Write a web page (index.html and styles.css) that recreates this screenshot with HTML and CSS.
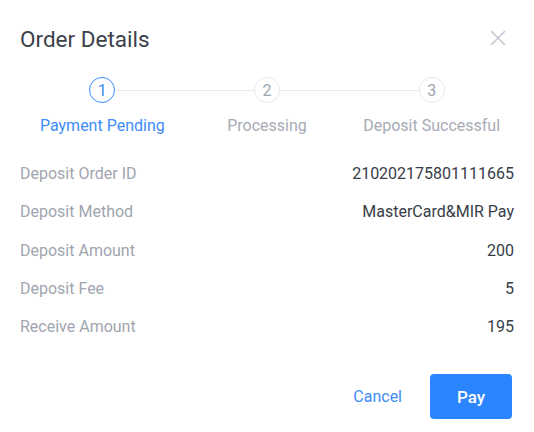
FILE: index.html
```html
<!DOCTYPE html>
<html lang="en">
<head>
<meta charset="utf-8">
<title>Order Details</title>
<link rel="stylesheet" href="styles.css">
</head>
<body>
<div class="dialog">
  <div class="header">
    <h1 class="title">Order Details</h1>
    <button class="close" aria-label="Close">
      <svg width="16" height="16" viewBox="0 0 16 16"><path d="M1 1L15 15M15 1L1 15" stroke="#c3c7cf" stroke-width="1.6" fill="none"/></svg>
    </button>
  </div>
  <div class="steps">
    <div class="step active">
      <span class="circle">1</span>
      <span class="step-label">Payment Pending</span>
    </div>
    <div class="step">
      <span class="circle">2</span>
      <span class="step-label">Processing</span>
    </div>
    <div class="step">
      <span class="circle">3</span>
      <span class="step-label">Deposit Successful</span>
    </div>
  </div>
  <div class="rows">
    <div class="row"><span class="label">Deposit Order ID</span><span class="value">210202175801111665</span></div>
    <div class="row"><span class="label">Deposit Method</span><span class="value">MasterCard&amp;MIR Pay</span></div>
    <div class="row"><span class="label">Deposit Amount</span><span class="value">200</span></div>
    <div class="row"><span class="label">Deposit Fee</span><span class="value">5</span></div>
    <div class="row"><span class="label">Receive Amount</span><span class="value">195</span></div>
  </div>
  <div class="footer">
    <button class="btn-text">Cancel</button>
    <button class="btn-primary">Pay</button>
  </div>
</div>
</body>
</html>
```
FILE: styles.css
```css
* { box-sizing: border-box; }
html, body {
  margin: 0;
  padding: 0;
  background: #fff;
  font-family: Roboto, "Liberation Sans", sans-serif;
}
.dialog {
  width: 534px;
  padding: 0 20px;
}
.header {
  display: flex;
  justify-content: space-between;
  align-items: flex-start;
  padding-top: 24px;
}
.title {
  margin: 0;
  font-size: 22.5px;
  line-height: 30px;
  font-weight: 400;
  color: #3c414b;
}
.close {
  border: 0;
  background: none;
  padding: 0;
  margin-top: 6px;
  margin-right: 8px;
  width: 16px;
  height: 16px;
  display: flex;
}
.steps {
  display: grid;
  grid-template-columns: repeat(3, 1fr);
  margin-top: 23px;
}
.step {
  position: relative;
  display: flex;
  flex-direction: column;
  align-items: center;
}
.step:not(:last-child)::after {
  content: "";
  position: absolute;
  top: 13px;
  left: calc(50% + 13px);
  width: calc(100% - 26px);
  height: 1px;
  background: #e6e9ef;
}
.circle {
  width: 26px;
  height: 26px;
  border-radius: 50%;
  border: 1px solid #e6e9ef;
  color: #a0a5af;
  font-size: 16px;
  display: flex;
  align-items: center;
  justify-content: center;
}
.step-label {
  margin-top: 13px;
  font-size: 16px;
  line-height: 20px;
  color: #a6abb5;
}
.step.active .circle {
  border: 1.5px solid #3d8cf8;
  color: #3d8cf8;
}
.step.active .step-label {
  color: #3d8cf8;
}
.rows {
  margin-top: 19px;
}
.row {
  display: flex;
  justify-content: space-between;
  height: 38.3px;
  line-height: 38px;
  font-size: 16px;
}
.label { color: #a0a5af; }
.value { color: #383d47; }
.footer {
  display: flex;
  justify-content: flex-end;
  align-items: center;
  margin-top: 28px;
  padding-right: 2px;
}
.btn-text {
  border: 0;
  background: none;
  padding: 0;
  font-family: inherit;
  font-size: 16px;
  color: #3d8cf8;
  margin-right: 28px;
}
.btn-primary {
  border: 0;
  width: 82px;
  height: 45px;
  border-radius: 4px;
  background: #2a85ff;
  color: #fff;
  font-family: inherit;
  font-size: 17px;
  font-weight: 500;
}
```
